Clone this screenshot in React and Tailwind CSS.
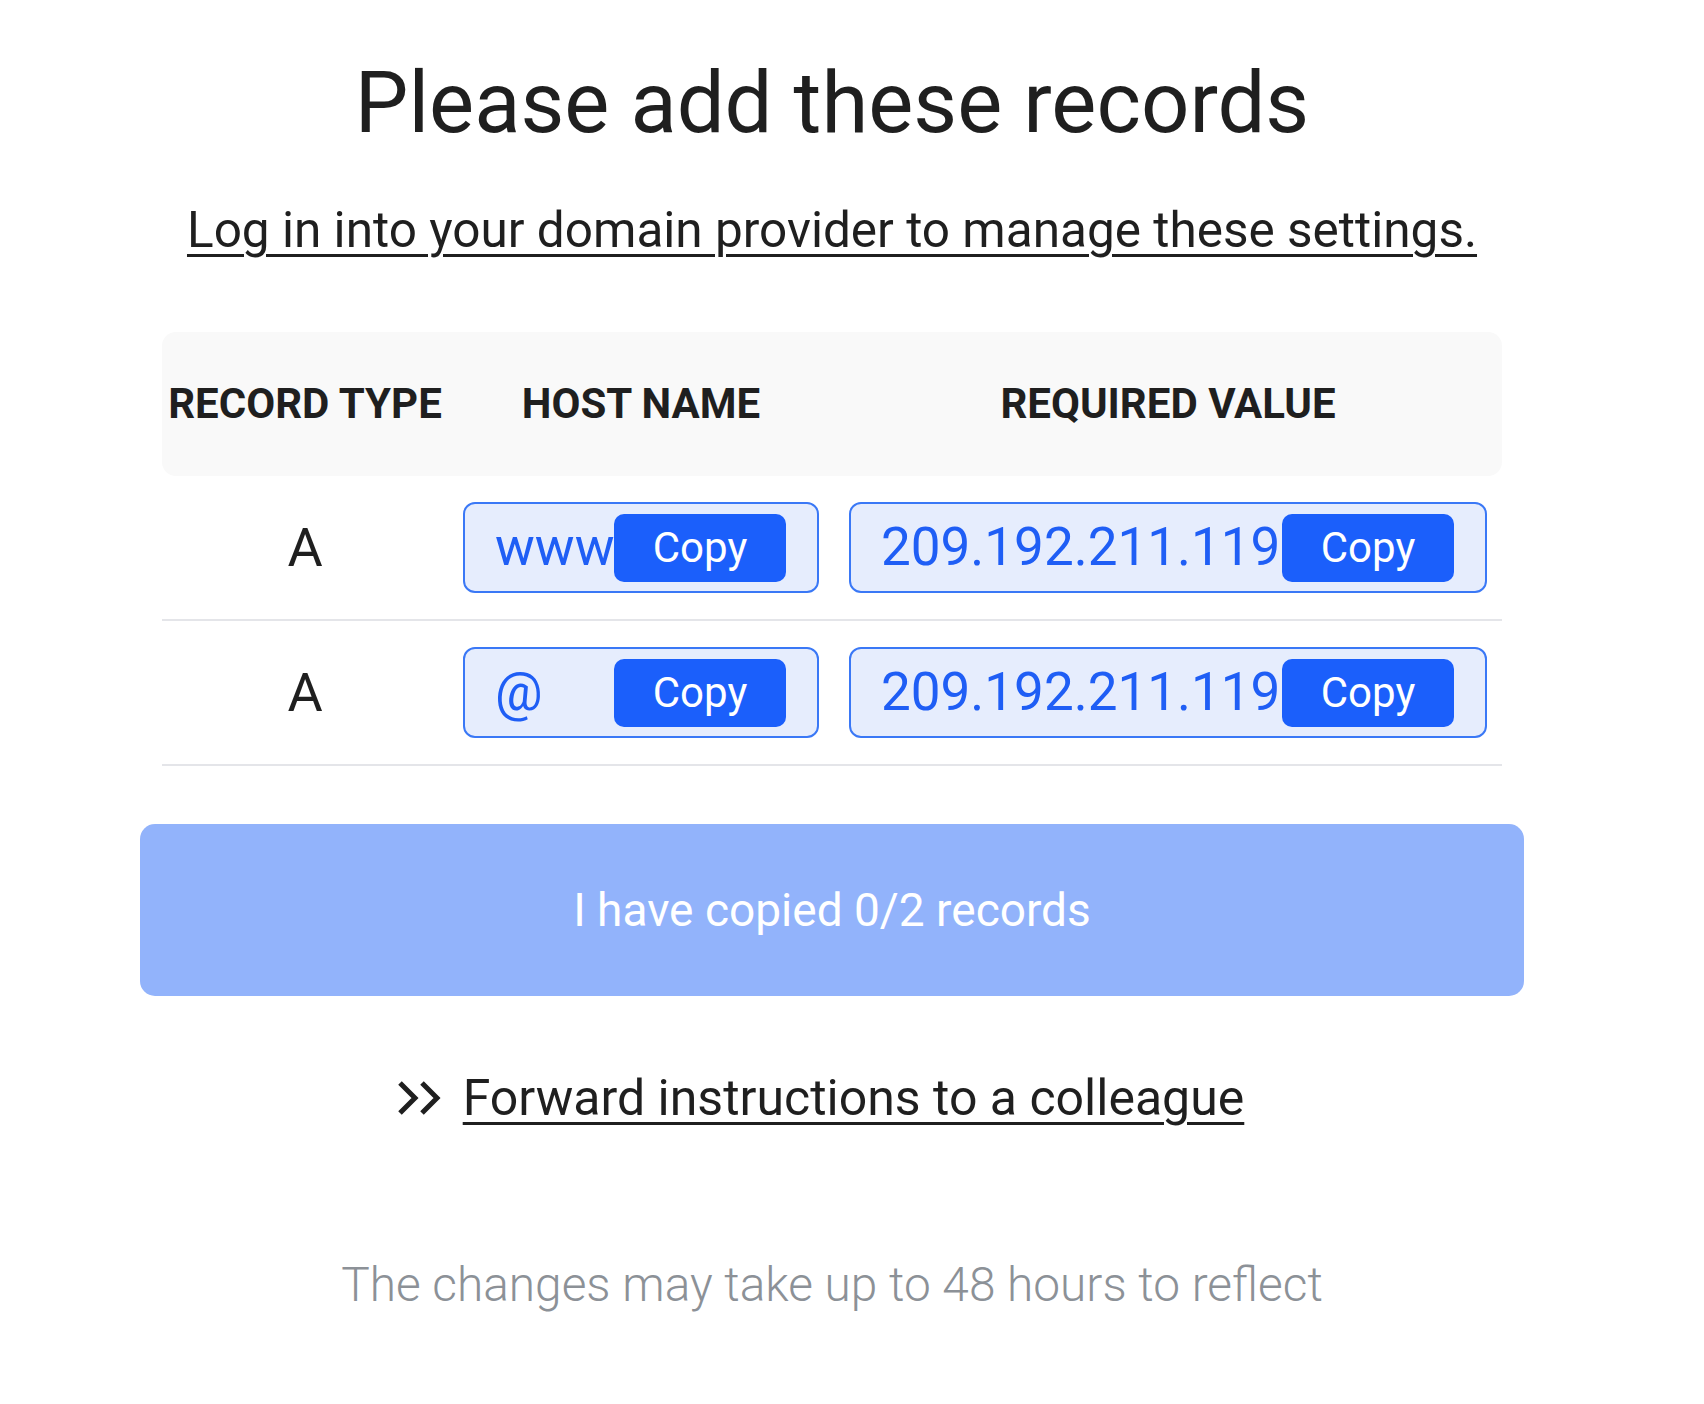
import React from 'react'

const records = [
  { type: 'A', host: 'www', value: '209.192.211.119' },
  { type: 'A', host: '@', value: '209.192.211.119' },
]

// value box with the copy button sitting over the end of the text
const CopyField = ({ text }) => {
  return (
    <div className="flex h-[91px] items-center rounded-[12px] border-2 border-[#3a78f6] bg-[#e6edfd] pl-[30px] pr-[31px]">
      <span className="min-w-0 flex-1 whitespace-nowrap text-[53px] leading-none text-[#1f5ef5]">{text}</span>
      <button className="flex h-[68px] w-[172px] shrink-0 items-center justify-center rounded-[10px] bg-[#1b5ffb] text-[42px] leading-none text-white">
        Copy
      </button>
    </div>
  )
}

const Chevrons = () => (
  <svg width="43" height="36" viewBox="0 0 43 36" fill="none" stroke="#1f1f1f" strokeWidth="5" strokeLinejoin="miter">
    <path d="M2 3 L17 18 L2 33" />
    <path d="M24 3 L39 18 L24 33" />
  </svg>
)

const App = () => {
  return (
    <div className="flex w-[1664px] flex-col items-center bg-white pb-[88px] font-[Roboto,sans-serif] text-[#1f1f1f]">
      <h1 className="pt-[53px] text-[85px] font-normal leading-[100px]">Please add these records</h1>

      <a href="#" className="mt-[47px] text-[49.5px] leading-[60px] underline decoration-[3px] underline-offset-[7px]">
        Log in into your domain provider to manage these settings.
      </a>

      {/* records table */}
      <div className="mt-[72px] w-[1340px]">
        <div className="grid h-[144px] grid-cols-[286px_386px_668px] items-center rounded-[14px] bg-[#f9f9f9] text-[42px] font-bold leading-none">
          <div className="whitespace-nowrap text-center">RECORD TYPE</div>
          <div className="whitespace-nowrap text-center">HOST NAME</div>
          <div className="whitespace-nowrap text-center">REQUIRED VALUE</div>
        </div>

        {records.map((rec, i) => (
          <div key={i} className="grid h-[145px] grid-cols-[286px_386px_668px] items-center border-b-2 border-[#e4e5e9]">
            <div className="text-center text-[54px] leading-none">{rec.type}</div>
            <div className="px-[15px]">
              <CopyField text={rec.host} />
            </div>
            <div className="px-[15px]">
              <CopyField text={rec.value} />
            </div>
          </div>
        ))}
      </div>

      <button className="mt-[58px] h-[172px] w-[1384px] rounded-[15px] bg-[#92b3fb] text-[46px] leading-none text-white">
        I have copied 0/2 records
      </button>

      <div className="mt-[72px] flex items-center gap-[22px] pr-[22px]">
        <Chevrons />
        <a href="#" className="text-[50px] leading-[60px] underline decoration-[3px] underline-offset-[7px]">
          Forward instructions to a colleague
        </a>
      </div>

      <p className="mt-[127px] text-[47.8px] font-light leading-[60px] text-[#8c9197]">
        The changes may take up to 48 hours to reflect
      </p>
    </div>
  )
}

export default App
